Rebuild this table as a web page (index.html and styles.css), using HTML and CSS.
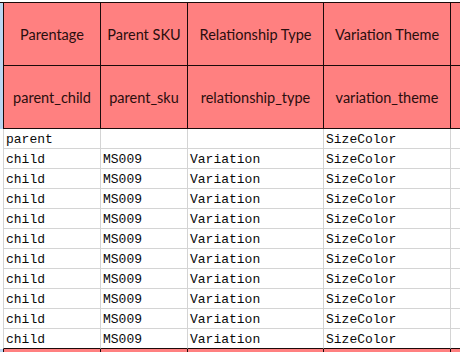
FILE: index.html
```html
<!DOCTYPE html>
<html>
<head>
<meta charset="utf-8">
<link rel="stylesheet" href="styles.css">
</head>
<body>
<table class="sheet">
  <tbody>
    <tr class="head">
      <td class="gutter"></td>
      <td class="c1">Parentage</td>
      <td class="c2">Parent SKU</td>
      <td class="c3">Relationship Type</td>
      <td class="c4">Variation Theme</td>
      <td class="c5"></td>
    </tr>
    <tr class="head">
      <td class="gutter"></td>
      <td>parent_child</td>
      <td>parent_sku</td>
      <td>relationship_type</td>
      <td>variation_theme</td>
      <td></td>
    </tr>
    <tr class="row"><td class="gutter"></td><td>parent</td><td></td><td></td><td>SizeColor</td><td></td></tr>
    <tr class="row"><td class="gutter"></td><td>child</td><td>MS009</td><td>Variation</td><td>SizeColor</td><td></td></tr>
    <tr class="row"><td class="gutter"></td><td>child</td><td>MS009</td><td>Variation</td><td>SizeColor</td><td></td></tr>
    <tr class="row"><td class="gutter"></td><td>child</td><td>MS009</td><td>Variation</td><td>SizeColor</td><td></td></tr>
    <tr class="row"><td class="gutter"></td><td>child</td><td>MS009</td><td>Variation</td><td>SizeColor</td><td></td></tr>
    <tr class="row"><td class="gutter"></td><td>child</td><td>MS009</td><td>Variation</td><td>SizeColor</td><td></td></tr>
    <tr class="row"><td class="gutter"></td><td>child</td><td>MS009</td><td>Variation</td><td>SizeColor</td><td></td></tr>
    <tr class="row"><td class="gutter"></td><td>child</td><td>MS009</td><td>Variation</td><td>SizeColor</td><td></td></tr>
    <tr class="row"><td class="gutter"></td><td>child</td><td>MS009</td><td>Variation</td><td>SizeColor</td><td></td></tr>
    <tr class="row"><td class="gutter"></td><td>child</td><td>MS009</td><td>Variation</td><td>SizeColor</td><td></td></tr>
    <tr class="row last"><td class="gutter"></td><td>child</td><td>MS009</td><td>Variation</td><td>SizeColor</td><td></td></tr>
    <tr class="foot"><td class="gutter"></td><td></td><td></td><td></td><td></td><td></td></tr>
  </tbody>
</table>
</body>
</html>
```

FILE: styles.css
```css
html, body {
  margin: 0;
  padding: 0;
  background: #ffffff;
  overflow: hidden;
  width: 460px;
  height: 352px;
}

.sheet {
  border-collapse: separate;
  border-spacing: 0;
  table-layout: fixed;
  width: 460px;
  margin-top: 2px;
}

.sheet td {
  box-sizing: border-box;
  padding: 0;
  white-space: nowrap;
  overflow: hidden;
}

.c1 { width: 98px; }
.c2 { width: 87px; }
.c3 { width: 136px; }
.c4 { width: 127px; }
.c5 { width: 9px; }

.sheet td.gutter {
  width: 3px;
  border: none;
  background: #bcd7f2;
}

.head td {
  height: 63px;
  background: #ff8080;
  border-right: 1px solid #1c0a0a;
  border-bottom: 1px solid #1c0a0a;
  font-family: Lato, "Open Sans", sans-serif;
  font-size: 14.5px;
  color: #2a0e0e;
  text-align: center;
  vertical-align: middle;
}

.head:first-child td {
  height: 64px;
  border-top: 1px solid #1c0a0a;
}

.head td:nth-child(2),
.foot td:nth-child(2) {
  border-left: 1px solid #1c0a0a;
}

.sheet tr td:last-child {
  border-right: none;
}

.row td {
  height: 20px;
  background: #ffffff;
  border-right: 1px solid #d4d4d4;
  border-bottom: 1px solid #d4d4d4;
  font-family: "Liberation Mono", "DejaVu Sans Mono", monospace;
  font-size: 13px;
  line-height: 15px;
  color: #0a0a0a;
  padding-left: 2px;
  vertical-align: bottom;
  padding-bottom: 1px;
}

.row td:nth-child(2) {
  border-left: 1px solid #d4d4d4;
}

.row td.gutter {
  background: #ffffff;
  padding: 0;
}

.row.last td {
  border-bottom-color: #1c0a0a;
}

.row.last td.gutter {
  border: none;
}

.foot td {
  height: 10px;
  background: #ff8080;
  border-right: 1px solid #1c0a0a;
}
```
